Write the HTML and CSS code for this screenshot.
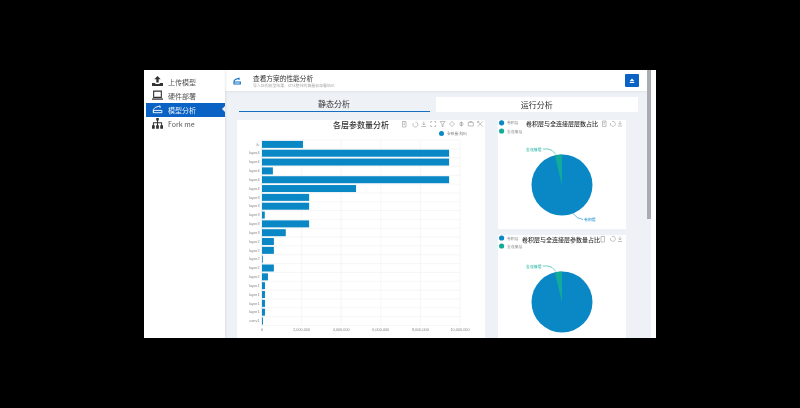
FILE: index.html
```html
<!DOCTYPE html>
<html lang="en">
<head>
  <meta charset="UTF-8" />
  <meta name="viewport" content="width=device-width, initial-scale=1.0" />
  <title>模型分析</title>
  <link rel="stylesheet" href="styles.css">
</head>
<body>
  <div class="app">
    <div class="sidebar">
      <a class="nav-item">
        <svg class="nav-icon" viewBox="0 0 12 12"><path d="M6 0 9.5 3.6H7.3V7H4.7V3.6H2.5Z M0 7.5H3.6V8.6H8.4V7.5H12V11H0Z" fill="#333"/></svg>
        <span>上传模型</span>
      </a>
      <a class="nav-item">
        <svg class="nav-icon" viewBox="0 0 12 12"><path d="M1.8 1.2H10.2V8H1.8Z" fill="none" stroke="#333" stroke-width="1.2"/><path d="M0 9.2H12V10.6H0Z" fill="#333"/></svg>
        <span>硬件部署</span>
      </a>
      <a class="nav-item active">
        <svg class="nav-icon" viewBox="0 0 12 12"><path d="M1.5 9.5V6L3.5 3.8 8.8 2V4.4 M1.5 7H10.8V9.5H1.5Z" fill="none" stroke="#fff" stroke-width="1"/></svg>
        <span>模型分析</span>
      </a>
      <a class="nav-item">
        <svg class="nav-icon" viewBox="0 0 12 12"><path d="M4.6 0H7.4V2.8H6.6V4.6H11V8H12V11.6H9V8H10V5.6H6.6V8H7.5V11.6H4.5V8H5.4V5.6H2V8H3V11.6H0V8H1V4.6H5.4V2.8H4.6Z" fill="#333"/></svg>
        <span>Fork me</span>
      </a>
    </div>

    <div class="main">
      <div class="page-header">
        <svg class="header-icon" viewBox="0 0 12 12"><path d="M1.5 10V6L3.5 3.6 9 2V4.6 M1.5 7.6H11V10.4H1.5Z" fill="none" stroke="#0a6fc2" stroke-width="1.6"/></svg>
        <div class="header-text">
          <div class="header-title">查看方案的性能分析</div>
          <div class="header-sub">导入您的模型结果，优化整体的算量和部署结论</div>
        </div>
        <div class="header-btn">
          <svg viewBox="0 0 8 8"><path d="M4 1.6 6.2 4H1.8Z M1.8 4.8H6.2V6H1.8Z" fill="#fff"/></svg>
        </div>
      </div>

      <div class="content">
        <div class="tabs">
          <div class="tab active">静态分析</div>
          <div class="tab">运行分析</div>
        </div>

        <div class="charts">
          <div class="card bar-card">
            <svg class="chart-svg" viewBox="0 0 248 218">
              <text class="chart-title" x="124" y="8">各层参数量分析</text>
              <g class="toolbox" id="barTools"></g>
              <circle cx="204.500" cy="13.500" r="2.500" fill="#0a88c6"/>
              <text class="legend-text" x="210" y="15">参数量(kps)</text>
              <g id="barPlot"></g>
            </svg>
          </div>

          <div class="pie-col">
            <div class="card pie-card">
              <svg class="chart-svg" viewBox="0 0 128 109">
                <circle cx="3.600" cy="2.800" r="2.600" fill="#0a88c6"/>
                <text class="legend-text" x="9" y="4.300">卷积层</text>
                <circle cx="3.600" cy="11" r="2.600" fill="#12ab9a"/>
                <text class="legend-text" x="9" y="12.500">全连接层</text>
                <text class="pie-title" x="64" y="6">卷积层与全连接层层数占比</text>
                <g class="toolbox"><path d="M104.500 1H108V6.500H104.500Z M105.500 2.500H107 M105.500 4H107"/><path d="M114 1.500A2.500 2.500 0 1 1 112.500 3"/><path d="M122 1V4.500 M120.500 3 122 4.500 123.500 3 M120 6H124"/></g>
                <circle cx="64" cy="65" r="30.500" fill="#0a88c6"/>
                <path d="M64 65 56.800 35.400A30.500 30.500 0 0 1 64 34.500Z" fill="#12ab9a"/>
                <path d="M45 29H50Q54 29 58 34.500" class="leader teal"/>
                <text class="pie-label teal-text" x="28" y="30.500">全连接层</text>
                <path d="M75 93.500Q79 99 85 99.500" class="leader blue"/>
                <text class="pie-label blue-text" x="86" y="101">卷积层</text>
              </svg>
            </div>
            <div class="card pie-card second">
              <svg class="chart-svg" viewBox="0 0 128 103">
                <circle cx="3.600" cy="3" r="2.600" fill="#0a88c6"/>
                <text class="legend-text" x="9" y="4.500">卷积层</text>
                <circle cx="3.600" cy="11" r="2.600" fill="#12ab9a"/>
                <text class="legend-text" x="9" y="12.500">全连接层</text>
                <text class="pie-title" x="63" y="6.500">卷积层与全连接层参数量占比</text>
                <g class="toolbox"><path d="M103 1.500H106.500V7H103Z"/><path d="M114 1.500A2.500 2.500 0 1 1 112.500 3"/><path d="M122 1.500V5 M120.500 3.500 122 5 123.500 3.500 M120 6.500H124"/></g>
                <circle cx="64" cy="67" r="30.500" fill="#0a88c6"/>
                <path d="M64 67 56.800 37.400A30.500 30.500 0 0 1 64 36.500Z" fill="#12ab9a"/>
                <path d="M45 31H50Q54 31 58 36.500" class="leader teal"/>
                <text class="pie-label teal-text" x="28" y="32.500">全连接层</text>
              </svg>
            </div>
          </div>
        </div>
      </div>
    </div>

    <div class="scrollbar"><div class="scroll-thumb"></div></div>
  </div>

  <script>
    // value of each layer, millions of params
    const rows = [
      ['fc', 2.07], ['layer4', 9.45], ['layer4', 9.45], ['layer4', 0.55], ['layer4', 9.45],
      ['layer4', 4.75], ['layer3', 2.38], ['layer3', 2.38], ['layer3', 0.14], ['layer3', 2.38],
      ['layer3', 1.2], ['layer2', 0.6], ['layer2', 0.6], ['layer2', 0.04], ['layer2', 0.6],
      ['layer2', 0.3], ['layer1', 0.15], ['layer1', 0.15], ['layer1', 0.15], ['layer1', 0.15],
      ['conv1', 0.05]
    ];
    const NS = 'http://www.w3.org/2000/svg';
    const plot = document.getElementById('barPlot');
    const left = 25, top0 = 20, rowH = 8.83, unit = 19.8;

    function add(parent, tag, attrs, text) {
      const el = document.createElementNS(NS, tag);
      for (const k in attrs) el.setAttribute(k, attrs[k]);
      if (text) el.textContent = text;
      parent.appendChild(el);
    }

    for (let i = 0; i <= 21; i++) {
      add(plot, 'line', { x1: left, x2: left + 198, y1: top0 + i * rowH, y2: top0 + i * rowH, class: 'grid' });
    }
    ['0', '2,000,000', '4,000,000', '6,000,000', '8,000,000', '10,000,000'].forEach((t, i) => {
      const x = left + i * 39.6;
      add(plot, 'line', { x1: x, x2: x, y1: top0, y2: top0 + 21 * rowH, class: i ? 'grid' : 'axis' });
      add(plot, 'text', { x: x, y: 211, class: 'tick tick-x' }, t);
    });
    rows.forEach((r, i) => {
      const y = top0 + i * rowH;
      add(plot, 'rect', { x: left, y: y + 0.9, width: r[1] * unit, height: 7, fill: '#0a88c6' });
      add(plot, 'text', { x: left - 2.5, y: y + 5.6, class: 'tick tick-y' }, r[0]);
    });

    // toolbox, nine small stroked glyphs
    const tools = [
      'M0 0H3.500V5.500H0Z M1 1.500H2.500 M1 3H2.500',
      'M3.500 0.500A2.500 2.500 0 1 1 1.500 1.500',
      'M2.500 0V3.500 M1 2 2.500 3.500 4 2 M0 5H5',
      'M0 1.500V0H1.500 M3.500 0H5V1.500 M5 3.500V5H3.500 M1.500 5H0V3.500',
      'M0 0H5L3 2.500V5H2V2.500Z',
      'M2.500 0 5 2.500 2.500 5 0 2.500Z',
      'M2.500 0V5 M0 2.500H5 M1 1 4 1 M1 4 4 4',
      'M0 1H5V4.500H0Z M1 0H4',
      'M0 0 5 5 M5 0 0 5 M0 1.500V0H1.500'
    ];
    const tb = document.getElementById('barTools');
    tools.forEach((d, i) => {
      add(tb, 'path', { d: d, transform: 'translate(' + (165.500 + i * 9.400) + ' 1.500)' });
    });
  </script>
</body>
</html>
```

FILE: styles.css
```css
html, body {
  margin: 0;
  padding: 0;
  height: 100%;
  overflow: hidden;
  background-color: #000;
  font-family: "Noto Sans CJK SC", "Noto Sans", sans-serif;
}
.app {
  display: flex;
  width: 512px;
  height: 268px;
  margin: 70px 144px 0;
  background: #fff;
  overflow: hidden;
  filter: blur(0.55px);
}
.sidebar {
  width: 81px;
  flex-shrink: 0;
  padding: 4.6px 0 0 2px;
  box-sizing: border-box;
  box-shadow: 1px 0 2px rgba(0, 0, 0, 0.08);
  z-index: 1;
}
.nav-item {
  position: relative;
  display: flex;
  align-items: center;
  gap: 5px;
  height: 14px;
  padding-left: 6px;
  font-size: 7px;
  color: #555;
}
.nav-item.active {
  background-color: #0a62c4;
  color: #e8f0fa;
}
.nav-item.active::after {
  content: "";
  position: absolute;
  right: 0;
  top: 3.500px;
  border: 3.500px solid transparent;
  border-right-color: #eef1f6;
  border-left-width: 0;
}
.nav-icon {
  width: 11px;
  height: 11px;
}
.main {
  width: 422px;
  flex-shrink: 0;
  background: #eef1f6;
  display: flex;
  flex-direction: column;
}
.page-header {
  display: flex;
  align-items: center;
  height: 21px;
  flex-shrink: 0;
  padding: 0 8px 0 8px;
  background: #fff;
  box-shadow: 0 1px 2px rgba(0, 0, 0, 0.06);
}
.header-icon {
  width: 8px;
  height: 8px;
  margin-right: 12px;
}
.header-text {
  flex: 1;
}
.header-title {
  font-size: 6.7px;
  line-height: 9px;
  color: #333;
}
.header-sub {
  font-size: 3.900px;
  line-height: 5px;
  color: #aaa;
}
.header-btn {
  display: flex;
  align-items: center;
  justify-content: center;
  width: 14px;
  height: 13px;
  background: #0a62c4;
  border-radius: 1px;
}
.header-btn svg {
  width: 8px;
  height: 8px;
}
.content {
  flex: 1;
  min-height: 0;
  padding: 6px 9px 0 12px;
}
.tabs {
  display: flex;
  gap: 6px;
  margin-left: 1.500px;
}
.tab {
  flex: 1;
  height: 15px;
  line-height: 15px;
  text-align: center;
  font-size: 8px;
  color: #333;
  background: #fff;
}
.tab.active {
  flex: 0 0 191px;
  background: transparent;
  height: 14px;
  line-height: 14px;
  border-bottom: 1.5px solid #1570c0;
}
.charts {
  display: flex;
  gap: 13px;
  margin-top: 8px;
}
.card {
  background: #fff;
}
.bar-card {
  width: 248px;
  height: 218px;
}
.pie-col {
  width: 128px;
  display: flex;
  flex-direction: column;
  gap: 6px;
}
.pie-card {
  height: 109px;
}
.pie-card.second {
  height: 103px;
}
.chart-svg {
  display: block;
  width: 100%;
  height: 100%;
}
.chart-title {
  font-size: 8px;
  font-weight: 500;
  fill: #333;
  text-anchor: middle;
}
.pie-title {
  font-size: 6px;
  font-weight: 500;
  fill: #333;
  text-anchor: middle;
}
.legend-text {
  font-size: 3.800px;
  fill: #888;
}
.toolbox path {
  fill: none;
  stroke: #999;
  stroke-width: 0.6;
}
.grid {
  stroke: #f0f0f0;
  stroke-width: 0.6;
}
.axis {
  stroke: #cfd4dc;
  stroke-width: 0.6;
}
.tick {
  font-size: 3.800px;
  fill: #888;
  font-family: "Liberation Sans", sans-serif;
}
.tick-x {
  text-anchor: middle;
}
.tick-y {
  text-anchor: end;
}
.leader {
  fill: none;
  stroke-width: 0.6;
}
.leader.teal {
  stroke: #12ab9a;
}
.leader.blue {
  stroke: #0a88c6;
}
.pie-label {
  font-size: 3.900px;
}
.teal-text {
  fill: #12ab9a;
}
.blue-text {
  fill: #0a88c6;
}
.scrollbar {
  width: 4px;
  flex-shrink: 0;
  background: #eef1f6;
}
.scroll-thumb {
  width: 4px;
  height: 149px;
  background: #a9acb2;
}
```
